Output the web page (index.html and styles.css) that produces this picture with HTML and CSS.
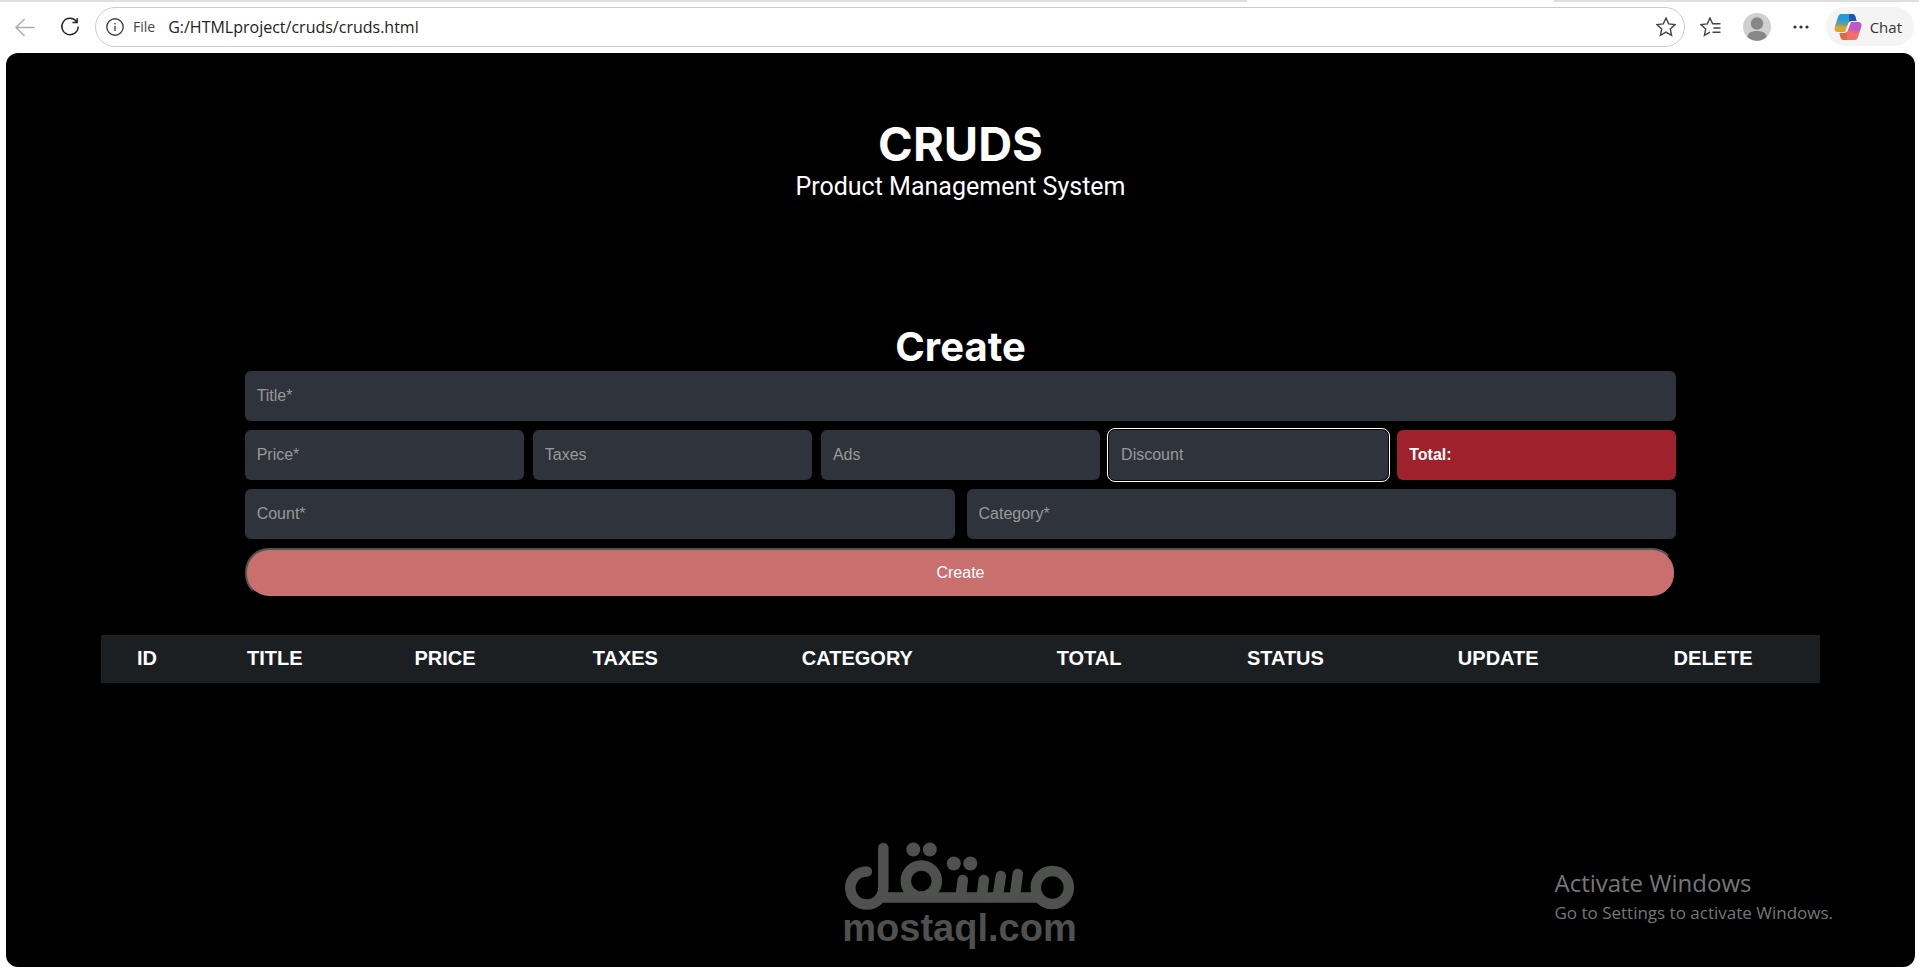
FILE: index.html
```html
<!DOCTYPE html>
<html lang="en">
<head>
    <meta charset="UTF-8">
    <meta name="viewport" content="width=device-width, initial-scale=1.0">
    <title>CRUDS</title>
    <link rel="stylesheet" href="styles.css">
</head>
<body>
    <!-- browser bar -->
    <div class="tabs">
        <div class="tab-active"></div>
    </div>
    <div class="toolbar">
        <button class="icon-btn back" aria-label="Back">
            <svg width="20" height="20" viewBox="0 0 20 20"><path d="M19.5 10.5H1M9.500 2L1 10.500l8.500 8.500"/></svg>
        </button>
        <button class="icon-btn refresh" aria-label="Refresh">
            <svg width="20" height="20" viewBox="0 0 20 20"><path d="M16.500 4.500A8.200 8.200 0 1 0 18.200 9.500M17.200 1v4.500h-4.700"/></svg>
        </button>
        <div class="address">
            <svg class="info" width="18" height="18" viewBox="0 0 18 18"><circle cx="9" cy="9" r="8.200"/><path d="M9 8v5M9 5v1.500"/></svg>
            <label class="scheme" for="url">File</label>
            <input class="url" id="url" type="text" value="G:/HTMLproject/cruds/cruds.html">
            <button class="icon-btn" aria-label="Add to favorites">
                <svg width="20" height="20" viewBox="0 0 20 20"><path d="M10 1l2.700 5.900 6.300.7-4.700 4.300 1.300 6.400L10 15.100l-5.600 3.200 1.300-6.400L1 7.600l6.300-.7z"/></svg>
            </button>
        </div>
        <div class="tools">
            <button class="icon-btn" aria-label="Favorites">
                <svg width="21" height="20" viewBox="0 0 21 20"><path d="M13 6.500h-.5L10 1 7.300 6.900 1 7.600l4.700 4.300-1.300 6.400L10 15.100M12.500 6.700h8M13.500 11h7M12.500 15.300h8"/></svg>
            </button>
            <button class="icon-btn" aria-label="Profile">
                <svg class="avatar" width="28" height="28" viewBox="0 0 28 28"><circle cx="14" cy="14" r="14" fill="#d0d0d0"/><circle cx="14" cy="10.500" r="6.200" fill="#868886"/><path d="M4.500 24c0-4 4-6 9.500-6s9.500 2 9.500 6a14 14 0 0 1-19 0z" fill="#868886"/></svg>
            </button>
            <button class="icon-btn dots" aria-label="Settings and more">
                <svg width="16" height="4" viewBox="0 0 16 4"><circle cx="2" cy="2" r="1.600"/><circle cx="8" cy="2" r="1.600"/><circle cx="14" cy="2" r="1.600"/></svg>
            </button>
        </div>
        <button class="chat">
            <svg width="28" height="28" viewBox="0 0 28 28">
                <defs>
                    <linearGradient id="cool" x1="0" y1="0" x2="0" y2="1">
                        <stop offset="0.3" stop-color="#219ddd"/>
                        <stop offset="0.6" stop-color="#7f9c86"/>
                        <stop offset="0.75" stop-color="#dda52f"/>
                    </linearGradient>
                    <linearGradient id="warm" x1="0.6" y1="0" x2="0.4" y2="1">
                        <stop offset="0.35" stop-color="#bd58c6"/>
                        <stop offset="0.6" stop-color="#f66b6b"/>
                        <stop offset="1" stop-color="#f0735a"/>
                    </linearGradient>
                </defs>
                <path d="M7 1h11c2 0 3 1 3.500 3l1 4h-5c-2 0-3 1-3.500 3L11 19H4C1 19-.2 17 .8 14L4 4c.7-2 1.500-3 3-3z" fill="url(#cool)"/>
                <path d="M15 1h3c2 0 3 1 3.500 3l1 4h-5c-1 0-1.800.3-2.300.8z" fill="#1c55b5"/>
                <path d="M21 27H10c-2 0-3-1-3.500-3l-1-4h5c2 0 3-1 3.500-3L17 9h7c3 0 4.200 2 3.200 5L24 24c-.7 2-1.500 3-3 3z" fill="url(#warm)"/>
                <path d="M13 27h-3c-2 0-3-1-3.500-3l-1-4h5c1 0 1.800-.3 2.300-.8z" fill="#e5673f"/>
            </svg>
            Chat
        </button>
    </div>

    <main class="page">
        <div class="crud">
            <div class="head">
                <h1>CRUDS</h1>
                <p>Product Management System</p>
            </div>

            <h2>Create</h2>
            <form class="inputs">
                <input type="text" id="title" placeholder="Title*" aria-label="Title">
                <div class="row price">
                    <input type="text" id="price" placeholder="Price*" aria-label="Price">
                    <input type="text" id="taxes" placeholder="Taxes" aria-label="Taxes">
                    <input type="text" id="ads" placeholder="Ads" aria-label="Ads">
                    <input type="text" id="discount" class="active" placeholder="Discount" aria-label="Discount">
                    <output id="total" for="price taxes ads discount">Total:</output>
                </div>
                <div class="row half">
                    <input type="text" id="count" placeholder="Count*" aria-label="Count">
                    <input type="text" id="category" placeholder="Category*" aria-label="Category">
                </div>
                <button type="button" class="submit" id="submit">Create</button>
            </form>
        </div>

        <table>
            <thead>
                <tr>
                    <th>id</th>
                    <th>title</th>
                    <th>price</th>
                    <th>taxes</th>
                    <th>category</th>
                    <th>total</th>
                    <th>status</th>
                    <th>update</th>
                    <th>delete</th>
                </tr>
            </thead>
            <tbody></tbody>
        </table>
    </main>

    <!-- watermarks over the page -->
    <div class="mostaql">
        <svg width="230" height="68" viewBox="0 0 230 68" role="img" aria-label="مستقل">
            <g class="strokes">
                <path d="M22 29.500a16.500 16.500 0 1 0 16.500 16.500V6"/>
                <path d="M36 55.500h158"/>
                <circle cx="76.500" cy="39" r="15.500"/>
                <circle cx="207.500" cy="45.500" r="16.500"/>
                <path d="M116 54l2-16M137 54l2-16M153 54l3-20M170 54l3-22"/>
            </g>
            <circle cx="68.500" cy="7.500" r="7"/><circle cx="85" cy="7.500" r="7"/>
            <circle cx="109" cy="21.500" r="7"/><circle cx="125.500" cy="21.500" r="7"/>
        </svg>
        <span>mostaql.com</span>
    </div>
    <div class="activate">
        <p class="big">Activate Windows</p>
        <p>Go to Settings to activate Windows.</p>
    </div>
</body>
</html>
```
FILE: styles.css
```css
* {
    margin: 0;
    padding: 0;
    box-sizing: border-box;
}

body {
    height: 100vh;
    display: flex;
    flex-direction: column;
    background: #fff;
    font-family: "Open Sans", "Noto Sans", sans-serif;
    overflow: hidden;
}

/* browser bar */
.tabs {
    height: 2px;
    background: #dfdfdf;
    display: flex;
}

.tab-active {
    width: 16%;
    margin-left: 65%;
    background: #fff;
}

.toolbar {
    height: 51px;
    padding: 0 5px 2px 15px;
    display: flex;
    align-items: center;
    gap: 25px;
}

.icon-btn {
    border: none;
    background: none;
    display: flex;
    cursor: pointer;
}

.icon-btn svg,
.info {
    fill: none;
    stroke: #444;
    stroke-width: 1.4;
}

.icon-btn.back svg {
    stroke: #aaa;
}

.icon-btn.refresh svg {
    stroke: #222;
}

.icon-btn .avatar {
    stroke: none;
}

.icon-btn.dots svg {
    stroke: none;
    fill: #333;
}

.address {
    flex: 1;
    height: 40px;
    margin-left: -10px;
    padding: 0 8px 0 10px;
    border: 1px solid #ccc;
    border-radius: 20px;
    display: flex;
    align-items: center;
}

.scheme {
    margin: 0 13px 0 9px;
    font-size: 14px;
    color: #444;
}

.url {
    flex: 1;
    border: none;
    outline: none;
    font-family: inherit;
    font-size: 16px;
    color: #222;
}

.tools {
    display: flex;
    align-items: center;
    gap: 22px;
    margin-left: -10px;
}

.chat {
    height: 39px;
    margin-left: -8px;
    padding: 0 12px 0 8px;
    border: none;
    border-radius: 20px;
    background: #f4f4f4;
    display: flex;
    align-items: center;
    gap: 8px;
    font-family: inherit;
    font-size: 15px;
    color: #333;
}

/* page */
.page {
    flex: 1;
    margin: 0 4px 0 6px;
    background: #000;
    border-radius: 12px;
    color: #fff;
    font-family: Roboto, sans-serif;
}

.crud {
    width: 75%;
    margin: auto;
}

.head {
    padding: 62px 0 122px;
    text-align: center;
}

h1,
h2 {
    font-family: Inter, sans-serif;
    text-align: center;
}

h1 {
    font-size: 47px;
    line-height: 58px;
}

.head p {
    font-size: 25px;
    line-height: 28px;
}

h2 {
    font-size: 40px;
    line-height: 48px;
}

.inputs {
    display: flex;
    flex-direction: column;
    gap: 9px;
}

.inputs input,
.inputs output,
.submit {
    width: 100%;
    height: 50px;
    border: none;
    border-radius: 6px;
    background: #2f333b;
    padding: 0 12px;
    color: #fff;
    font-family: "Liberation Sans", Arial, sans-serif;
    font-size: 16px;
    line-height: 50px;
}

.inputs input::placeholder {
    color: #999;
}

.inputs input.active {
    outline: 1px solid #fff;
    outline-offset: 1px;
}

.row {
    display: flex;
    gap: 9px;
}

.row.half {
    gap: 12px;
}

.inputs output {
    background: #9f212b;
    font-weight: bold;
}

.inputs .submit {
    background: #c9706f;
    border: 2px outset #000;
    border-radius: 24px;
    line-height: 20px;
    cursor: pointer;
}

table {
    width: 90%;
    margin: 37px auto 0;
    border-collapse: collapse;
    background: #1b1f22;
    font-family: "Liberation Sans", Arial, sans-serif;
    font-size: 20px;
    text-transform: uppercase;
}

th {
    height: 48px;
    padding: 0 12px 2px;
}

/* watermarks */
.mostaql {
    position: absolute;
    left: 50%;
    bottom: 21px;
    transform: translateX(-50%);
    display: flex;
    flex-direction: column;
    align-items: center;
    color: #4f514f;
    font-family: "Liberation Sans", Arial, sans-serif;
    font-size: 38px;
    font-weight: bold;
    line-height: 36px;
}

.mostaql svg {
    fill: currentColor;
}

.mostaql .strokes {
    fill: none;
    stroke: currentColor;
    stroke-width: 10.5;
    stroke-linecap: round;
}

.activate {
    position: absolute;
    right: 86px;
    bottom: 41px;
    color: #777;
    font-size: 17px;
    line-height: 26px;
}

.activate .big {
    font-size: 24px;
    line-height: 34px;
}
```
